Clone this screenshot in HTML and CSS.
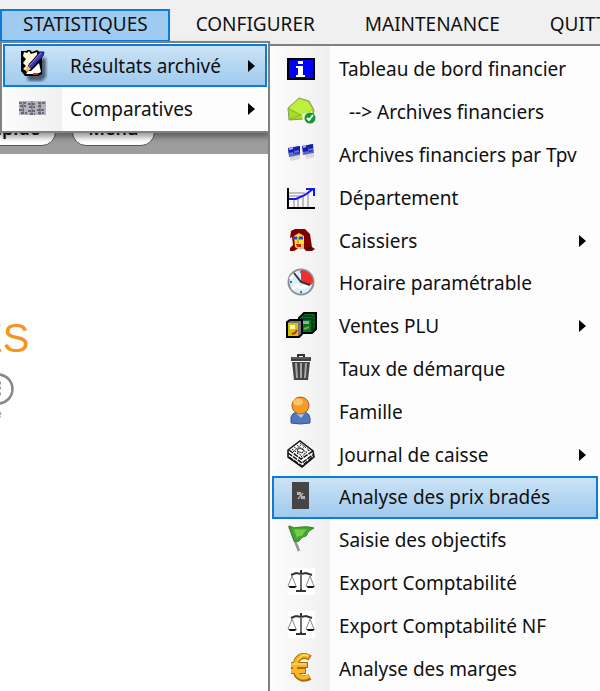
FILE: index.html
```
<!DOCTYPE html>
<html lang="fr">
<head>
<meta charset="utf-8">
<title>Statistiques</title>
<link rel="stylesheet" href="styles.css">
</head>
<body>
<nav class="menubar">
  <button class="tab tab-open">STATISTIQUES</button>
  <button class="tab">CONFIGURER</button>
  <button class="tab">MAINTENANCE</button>
  <button class="tab">QUITTER</button>
</nav>
<div class="toolbar">
  <button class="pill pill-first">Rapide</button>
  <button class="pill">Menu</button>
</div>
<main class="brand">
  <div class="brand-name">ES</div>
  <svg class="brand-mark" viewBox="0 0 16 36" aria-hidden="true"><circle cx="-2" cy="17" r="14.500" fill="none" stroke="#85898e" stroke-width="2.500"/><path d="M0 11h1M0 16h1M0 22h1" stroke="#999da1" stroke-width="3"/></svg>
  <div class="brand-note">e</div>
</main>

<div class="menu dropdown">
  <button class="item selected">
    <svg class="icon" viewBox="0 0 32 32"><defs><filter id="soft"><feGaussianBlur stdDeviation="1.6"/></filter></defs><path d="M9 8h21v19l-4 4H12z" fill="#28394a" opacity=".75" filter="url(#soft)"/><path d="M5 1h5l3-2 3 3 5-2 3 2 2 1v21l-4 2H9l-4-5z" fill="#000"/><path d="M8 2l3 1 2-2 2 3 6-2v3l-8 9-2 7-4-2 3-3-3-3 3-4-3-3z" fill="#fff6dc"/><path d="M15 21l8-8 2 9-4 2H10l2-3z" fill="#fff"/><path d="M12 16l12-14 4 0-1 4-12 13z" fill="#3d35bd" stroke="#15144e"/><path d="M13 16l12-13" stroke="#8d88ef"/><path d="M9 20l3-4 3 3-4 3z" fill="#f7bd4f"/><path d="M17 24h5" stroke="#d22" stroke-width="2"/></svg>
    <span class="label">Résultats archivé</span><span class="arrow"></span>
  </button>
  <button class="item">
    <svg class="icon" viewBox="0 0 32 32"><g fill="#b5b1bd"><path d="M3 8h27v14H3z"/></g><path d="M3 10h7M4 13h6M12 11h7M13 14h6M22 10h7M22 13h4M3 17h5M5 20h6M12 18h7M14 21h5M21 17h8M22 20h6" stroke="#55515f" stroke-width="1.4" stroke-dasharray="3 1"/><path d="M16 8v13M24 9v13M7 11v10" stroke="#66616e"/></svg>
    <span class="label">Comparatives</span><span class="arrow"></span>
  </button>
</div>

<div class="menu submenu">
  <button class="item">
    <svg class="icon" viewBox="0 0 32 32"><path d="M3 6h26v20H3z" fill="#00f" stroke="#000" stroke-width="2"/><path d="M13 8h5v3h-5zM11 13h7v9h2v2h-9v-2h2v-7h-2z" fill="#fff"/></svg>
    <span class="label">Tableau de bord financier</span>
  </button>
  <button class="item">
    <svg class="icon" viewBox="0 0 32 32"><path d="M3 12L14 2l10 3 5 9-2 12-9-3-14 1z" fill="#a8dc24" stroke="#829c63"/><path d="M4 12L14 3l9 3 4 8-11 5z" fill="#c0ee3f"/><path d="M4 13l12 6 11-4M16 19L5 23" stroke="#80bd18" fill="none"/><path d="M17 18l10-3v8l-9 1z" fill="#edffd0"/><circle cx="25" cy="22" r="5.500" fill="#15982e"/><path d="M22 22l2 2 4-5" stroke="#fff" stroke-width="2" fill="none"/></svg>
    <span class="label indent">--&gt; Archives financiers</span>
  </button>
  <button class="item">
    <svg class="icon" viewBox="0 0 32 32"><path d="M4 17l11-1v4L6 22zM19 15l10-1v4l-7 2z" fill="#d8d8d5"/><path d="M3 9l12-2v9l-11 2zM17 7l11-2 1 9-11 2z" fill="#5b66c8"/><path d="M3 9l6-1v6l-5 2zM9 8l6-1v7l-5 1zM17 7l6-1v6l-5 1zM23 6l5-1v7l-4 1z" fill="#161bb0"/><path d="M4 10l4-1M18 8l3-1" stroke="#a8b8ef" stroke-width="2"/><path d="M4 15l4-1M10 13l4-1M24 11l4-1" stroke="#5878db" stroke-width="2"/></svg>
    <span class="label">Archives financiers par Tpv</span>
  </button>
  <button class="item">
    <svg class="icon" viewBox="0 0 32 32"><path d="M4 11h16M4 14h14M9 17v8M13 17v8M18 14v11M23 10v15" stroke="#aaa" stroke-width="1.5"/><path d="M3 6v20h27" stroke="#000" stroke-width="2" fill="none"/><path d="M4 17h7l9-4 8-6M21 7h8v7" stroke="#1515f0" stroke-width="2" fill="none"/></svg>
    <span class="label">Département</span>
  </button>
  <button class="item">
    <svg class="icon" viewBox="0 0 32 32"><path d="M6 6l4-2h10l5 5 2 13 3 2-3 2h-6l-4-5-8 5H5v-3l3-3-1-8-2 1z" fill="#800000"/><path d="M9 11l5-3 5 3v8l-4 6-5-3z" fill="#ffe02b"/><path d="M8 13h4M14 13h4" stroke="#2540ed" stroke-width="3"/><path d="M13 12v6" stroke="#957e2b"/><path d="M11 19h5v3h-4z" fill="#e91313"/><path d="M15 24l4-5v5z" fill="#bbb"/><path d="M23 23h3" stroke="#000" stroke-width="2"/></svg>
    <span class="label">Caissiers</span><span class="arrow"></span>
  </button>
  <button class="item">
    <svg class="icon" viewBox="0 0 32 32"><circle cx="16" cy="15" r="12.500" fill="#d9effb" stroke="#8b9398" stroke-width="2"/><path d="M16 15V3a12 12 0 0 1 12 12c-1 3-3 3-4 3z" fill="#f22b2c"/><path d="M5 12q5-7 7-4M7 22l5-4 4 3 7-2" stroke="#fff" stroke-width="3" fill="none"/><path d="M9 6l7 9 9 3" stroke="#30363a" stroke-width="2" fill="none"/><path d="M16 4v2M5 15h2M16 24v2M26 15h1" stroke="#537586" stroke-width="2"/></svg>
    <span class="label">Horaire paramétrable</span>
  </button>
  <button class="item">
    <svg class="icon" viewBox="0 0 32 32"><path d="M14 8l5-5h12v16l-4 4H14z" fill="#06732b" stroke="#000" stroke-width="2"/><path d="M16 9h10l4-4M27 9v13M18 6h9M27 12l3-3M27 16l3-3M27 20l3-3" stroke="#063516" stroke-width="1.5" fill="none"/><path d="M18 11h6v3h-6z" fill="#9da7a0"/><path d="M19 19l5-2" stroke="#8ca32d" stroke-width="2"/><path d="M2 12l3-2h12v14l-3 3H2z" fill="#777" stroke="#000" stroke-width="2"/><path d="M3 13h10v13H3z" fill="#d1c500"/><path d="M5 15h5v4H5z" fill="#fff9b8"/><path d="M7 24l3-1 2-3" stroke="#e01b16" stroke-width="2" fill="none"/></svg>
    <span class="label">Ventes PLU</span><span class="arrow"></span>
  </button>
  <button class="item">
    <svg class="icon" viewBox="0 0 32 32"><path d="M13 4V2h6v2" fill="none" stroke="#333" stroke-width="2"/><path d="M6 4h20v4H6z" fill="#3f4142"/><path d="M7 9h18l-2 18H9z" fill="#424446"/><path d="M11 10l1 15M16 10v15M21 10l-1 15" stroke="#a5a6a7" stroke-width="2"/><path d="M7 5h18" stroke="#737576"/></svg>
    <span class="label">Taux de démarque</span>
  </button>
  <button class="item">
    <svg class="icon" viewBox="0 0 32 32"><path d="M6 27v-6q1-4 6-5h8q5 2 5 6v5q-10 2-19 0z" fill="#5277bd" stroke="#32558e"/><path d="M11 17l5 5 4-5z" fill="#aec8ed"/><circle cx="15.500" cy="9.500" r="8.500" fill="#f29b28" stroke="#a76017"/><ellipse cx="13" cy="6" rx="5" ry="3.500" fill="#ffc468"/></svg>
    <span class="label">Famille</span>
  </button>
  <button class="item">
    <svg class="icon" viewBox="0 0 32 32"><path d="M3 11L15 2l13 10 1 6-12 10L3 18z" fill="#fff" stroke="#111" stroke-width="1.5"/><path d="M4 11l12 9 12-8M3 14l14 10 12-9M4 18l13 9 12-10" stroke="#111" fill="none" stroke-width="1.5" stroke-dasharray="5 1"/><path d="M7 10l10 7M9 8l11 7M12 6l10 8M15 4l10 8M8 13l9-8M12 15l8-8M16 18l8-7" stroke="#222" stroke-dasharray="2 1"/><path d="M14 9l5 2-2 3-5-2z" fill="#fff" stroke="#333"/></svg>
    <span class="label">Journal de caisse</span><span class="arrow"></span>
  </button>
  <button class="item selected">
    <svg class="icon" viewBox="0 0 32 32"><path d="M7 1h17v27H7z" fill="#454545"/><path d="M12 11h4v3h-4zM16 15h4v3h-4z" fill="#bbb"/><path d="M18 12l-5 6M12 11l8 7" stroke="#aaa" stroke-width="1.5"/></svg>
    <span class="label">Analyse des prix bradés</span>
  </button>
  <button class="item">
    <svg class="icon" viewBox="0 0 32 32"><path d="M4 2l10 25" stroke="#929292" stroke-width="2.500"/><path d="M4 2q5 3 12 1 6-1 13 1-6 2-8 8-4 0-7 5-3 1-5 0z" fill="#43a52e" stroke="#367f29"/><path d="M9 5q7 1 13 0-3 3-5 7-3-1-5 2z" fill="#72cd4b"/></svg>
    <span class="label">Saisie des objectifs</span>
  </button>
  <button class="item">
    <svg class="icon" viewBox="0 0 32 32"><g id="scales"><path d="M3 1h27v27H3z" fill="#fff"/><path d="M16 3v20M11 24h10M6 8l5-2 5 1 5-1 6 2" stroke="#333" stroke-width="2" fill="none"/><path d="M7 9l-4 10M7 9l4 10M25 9l-4 10M25 9l4 10" stroke="#888"/><path d="M3 19h9l-2 2H5zM21 19h9l-2 2h-5z" fill="#111"/><path d="M16 7v15" stroke="#aaa"/></g></svg>
    <span class="label">Export Comptabilité</span>
  </button>
  <button class="item">
    <svg class="icon" viewBox="0 0 32 32"><use href="#scales"/></svg>
    <span class="label">Export Comptabilité NF</span>
  </button>
  <button class="item">
    <svg class="icon" viewBox="0 0 32 32"><path d="M25 5q-8-5-13 2-4 8 0 15 5 6 13 2M6 12h17M6 18h15" stroke="#ad6b0d" stroke-width="6" fill="none"/><path d="M24 4q-7-4-12 3-4 8 0 14 4 6 12 2M6 12h16M6 18h14" stroke="#f6b727" stroke-width="4" fill="none"/><path d="M23 3q-6-3-10 4M7 11h14" stroke="#ffe783" fill="none"/></svg>
    <span class="label">Analyse des marges</span>
  </button>
</div>
</body>
</html>
```
FILE: styles.css
```
* {
  box-sizing: border-box;
}

body {
  margin: 0;
  min-height: 100vh;
  overflow: hidden;
  position: relative;
  background: #fff;
  color: #101010;
  font-family: "Noto Sans", "Open Sans", sans-serif;
  font-size: 19px;
}

button {
  margin: 0;
  padding: 0;
  border: 0;
  background: none;
  color: inherit;
  font: inherit;
  white-space: nowrap;
}

.menubar {
  display: flex;
  gap: 2px;
  height: 46px;
  padding-top: 7px;
  border-top: 2px solid #edf2fa;
  background: #f0f0f0;
  overflow: hidden;
}

.tab {
  flex: none;
  height: 33px;
  padding: 0 22px 4px;
  border: 2px solid transparent;
  line-height: 24px;
}

.tab-open {
  padding: 0 20px 4px 21px;
  border-color: #0c7cd8;
  background: #a0cbf0;
}

.toolbar {
  display: flex;
  align-items: flex-end;
  gap: 16px;
  height: 108px;
  padding-bottom: 8px;
  background: #9d9d9d;
}

.pill {
  height: 32px;
  padding: 0 15px 4px;
  border: 1px solid #555;
  border-radius: 14px;
  background: #fff;
  font-size: 18px;
  font-weight: 600;
  line-height: 24px;
}

.pill-first {
  margin-left: -36px;
}

.brand {
  padding-top: 160px;
}

.brand-name {
  margin-left: -24px;
  color: #f7941d;
  font: 40px/48px "Liberation Sans", sans-serif;
}

.brand-mark {
  display: block;
  width: 16px;
  height: 36px;
  margin-top: 10px;
}

.brand-note {
  margin-left: -5px;
  color: #999;
  font: 12px/12px "Liberation Sans", sans-serif;
}

.menu {
  position: absolute;
  display: grid;
  grid-auto-rows: 1fr;
  border: 2px solid #808080;
  background: linear-gradient(90deg, #fcfcfc, #f0f0f0 60px, #fdfdfd 60px);
}

.dropdown {
  top: 41px;
  left: 0;
  width: 270px;
  height: 92px;
  padding: 1px 1px 1px 1px;
  box-shadow: 0 4px 6px #0006;
}

.submenu {
  top: 44px;
  right: 0;
  bottom: 0;
  left: 268px;
  padding: 2px 2px 1px;
  border-right: 0;
  border-bottom: 0;
}

.item {
  display: flex;
  align-items: center;
  min-height: 0;
  padding: 0 10px 0 11px;
  border: 2px solid transparent;
  text-align: left;
}

.selected {
  border-color: #0c7cd8;
  background: linear-gradient(#cbe3f6, #a0caed);
}

.icon {
  flex: none;
  width: 32px;
  height: 32px;
  margin-right: 22px;
}

.label {
  flex: 1;
  line-height: 28px;
}

.indent {
  padding-left: 10px;
}

.arrow {
  border: 6px solid transparent;
  border-right: 0;
  border-left: 7px solid #000;
}
```
